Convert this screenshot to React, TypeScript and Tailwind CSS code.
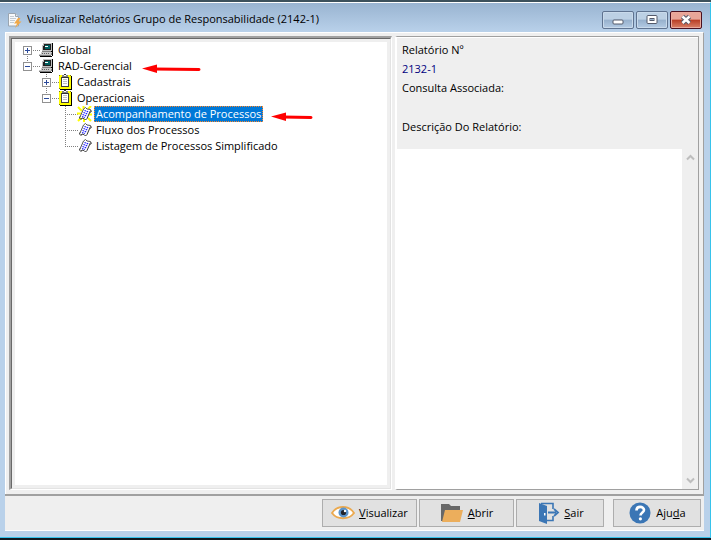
import { useState, type ReactNode } from "react";

type IconKind = "computer" | "clipboard" | "report" | "reportNew";

interface TreeNode {
  id: string;
  label: string;
  icon: IconKind;
  children?: TreeNode[];
  expandable?: boolean;
}

const NODES: TreeNode[] = [
  { id: "global", label: "Global", icon: "computer", expandable: true },
  {
    id: "rad",
    label: "RAD-Gerencial",
    icon: "computer",
    expandable: true,
    children: [
      { id: "cad", label: "Cadastrais", icon: "clipboard", expandable: true },
      {
        id: "ope",
        label: "Operacionais",
        icon: "clipboard",
        expandable: true,
        children: [
          { id: "acomp", label: "Acompanhamento de Processos", icon: "reportNew" },
          { id: "fluxo", label: "Fluxo dos Processos", icon: "report" },
          { id: "list", label: "Listagem de Processos Simplificado", icon: "report" },
        ],
      },
    ],
  },
];

function ComputerIcon() {
  return (
    <svg width="19" height="16" viewBox="0 0 19 16" shapeRendering="crispEdges">
      <path d="M6 1h9v8H5V3h1z" fill="#c0c0c0" />
      <path d="M7 2h7v6H6V4h1z" fill="#202020" />
      <path d="M8 3h5v4H8z" fill="#006060" />
      <path d="M8 4h3v1H8z" fill="#fff" />
      <path d="M15 1h1v9h-1zM14 9h1v1h-1z" fill="#000" />
      <path d="M5 9h9v1H5z" fill="#808080" />
      <path d="M4 10h11v3H2v-1h2z" fill="#c8c8c8" />
      <path d="M5 11h1v1H5zM7 11h1v1H7zM9 11h1v1H9zM11 11h1v1h-1z" fill="#606060" />
      <path d="M2 13h12v1H2zM14 11h1v2h-1z" fill="#808080" />
      <path d="M3 14h12v1H3zM15 10h1v4h-1z" fill="#000" />
    </svg>
  );
}

function ClipboardIcon() {
  return (
    <svg width="19" height="16" viewBox="0 0 19 16" shapeRendering="crispEdges">
      <path d="M4 2h12v14H4z" fill="#000" />
      <path d="M3 1h12v14H3z" fill="#ff0" />
      <path d="M3 1h1v1H3zM14 1h1v1h-1zM3 14h1v1H3z" fill="#808000" />
      <path d="M5 3h8v10H5z" fill="#404040" />
      <path d="M6 4h6v8H6z" fill="#fff" />
      <path d="M6 1h6v2H6z" fill="#808080" />
      <path d="M8 0h2v1H8zM6 3h6v1H6z" fill="#303030" />
      <path d="M8 1h2v1H8z" fill="#fff" />
      <path d="M7 5h4v1H7zM7 7h4v1H7zM7 9h4v1H7z" fill="#c0c0c0" />
    </svg>
  );
}

function ReportIcon({ isNew }: { isNew?: boolean }) {
  return (
    <svg width="19" height="16" viewBox="0 0 19 16">
      {isNew && (
        <path
          d="M3 1l4 4M8.500 0v3M16 0l-3 3M2 7.500h4M3 15l4-4M13 12l3 3M13 8.500h4M9 13v3"
          stroke="#ff0"
          strokeWidth="2"
        />
      )}
      <path d="M8.500 3l2-1.500 1.500 1.500 4 .5-3.500 8-2 2.500-1.500-1.500-4-1z" fill="#fff" />
      <path d="M8.500 3l2-1.500 1.500 1.500 3.500.5 1 2-1.500 1M8.500 3L5 11" fill="none" stroke="#555" />
      <path d="M15.500 4.500l-3.500 8-1.500 1.500-1.500-1.500-2-.5-1 1.500-1.500-1.500.5-1.500" fill="none" stroke="#333" />
      <path d="M9.500 4.500l4 1.500M8.500 6.500l4 1.500M7.500 8.500l4 1.500M7 10.500l3 1" stroke="#2020ff" strokeDasharray="1.600 .7" strokeWidth="1.200" />
    </svg>
  );
}

function NodeIcon({ kind }: { kind: IconKind }) {
  if (kind === "computer") return <ComputerIcon />;
  if (kind === "clipboard") return <ClipboardIcon />;
  return <ReportIcon isNew={kind === "reportNew"} />;
}

// dotted guide lines plus the +/- box
function Guide({ up, down, box }: { up: boolean; down: boolean; box?: "+" | "-" }) {
  return (
    <svg width="19" height="16" viewBox="0 0 19 16" className="overflow-visible" shapeRendering="crispEdges">
      {up && <path d="M9.500 0V8" stroke="#808080" strokeDasharray="1 1" />}
      {down && <path d="M9.500 8V16" stroke="#808080" strokeDasharray="1 1" />}
      <path d="M9 8.500H22" stroke="#808080" strokeDasharray="1 1" />
      {box && (
        <>
          <rect x="5.500" y="4.500" width="8" height="8" fill="#fff" stroke="#919191" />
          <path d="M7 8.500h5" stroke="#2b4a9b" />
          {box === "+" && <path d="M9.500 6v5" stroke="#2b4a9b" />}
        </>
      )}
    </svg>
  );
}

function Arrow({ length }: { length: number }) {
  return (
    <span className="relative ml-2 flex h-1">
      <svg width={length} height="10" viewBox={`0 0 ${length} 10`} className="absolute">
        <path d={`M12 5L${length - 2} 5.500`} stroke="#f00" strokeWidth="3" strokeLinecap="round" />
        <path d="M0 4.500L15 .5 15 9z" fill="#f00" />
      </svg>
    </span>
  );
}

interface BranchProps {
  nodes: TreeNode[];
  depth: number;
  open: Set<string>;
  selected: string;
  onToggle: (id: string) => void;
  onSelect: (id: string) => void;
}

function Branch({ nodes, depth, open, selected, onToggle, onSelect }: BranchProps) {
  return (
    <ul role={depth === 0 ? "tree" : "group"} className={depth === 0 ? "" : "pl-[19px]"}>
      {nodes.map((n, i) => {
        const isOpen = open.has(n.id);
        const guide = (
          <Guide
            up={depth > 0 || i > 0}
            down={i < nodes.length - 1}
            box={n.expandable ? (isOpen ? "-" : "+") : undefined}
          />
        );
        return (
          <li key={n.id} role="treeitem" aria-selected={selected === n.id}>
            <div className="flex h-4 items-center">
              {n.expandable ? (
                <button aria-label={n.label} aria-expanded={isOpen} onClick={() => onToggle(n.id)}>
                  {guide}
                </button>
              ) : (
                guide
              )}
              <span className="relative">
                <NodeIcon kind={n.icon} />
              </span>
              <button
                onClick={() => onSelect(n.id)}
                className={
                  selected === n.id
                    ? "h-4 whitespace-nowrap bg-[#0078d7] px-0.5 leading-4 text-white outline-1 -outline-offset-1 outline-dotted outline-[#ff8728]"
                    : "h-4 whitespace-nowrap px-0.5 leading-4"
                }
              >
                {n.label}
              </button>
              {n.id === "rad" && <Arrow length={59} />}
              {n.id === "acomp" && <Arrow length={42} />}
            </div>
            {n.children && isOpen && (
              <Branch
                nodes={n.children}
                depth={depth + 1}
                open={open}
                selected={selected}
                onToggle={onToggle}
                onSelect={onSelect}
              />
            )}
          </li>
        );
      })}
    </ul>
  );
}

function TitleIcon() {
  return (
    <svg width="16" height="16" viewBox="0 0 16 16">
      <path d="M1.500 1.500h7l3 3v9.500h-10z" fill="#f7f9fb" stroke="#9aa5b0" />
      <path d="M8.500 1.500v3h3" fill="#dfe5ea" stroke="#9aa5b0" />
      <path d="M3 4.500h4M3 6.500h6M3 8.500h5M3 10.500h4" stroke="#c3cbd3" />
      <path d="M11 6L7 11.500h3L8 16l6.500-6.500h-3L13.500 6z" fill="#f0a848" />
    </svg>
  );
}

function WindowButton({ label, close, children }: { label: string; close?: boolean; children: ReactNode }) {
  return (
    <button
      aria-label={label}
      className={
        close
          ? "flex h-[18px] w-8 items-center justify-center rounded-xs border border-[#4a1020] bg-linear-to-b from-[#e8a598] from-45% via-[#b83c24] via-50% to-[#d98068] inset-ring inset-ring-[#e9a99d]"
          : "flex h-[18px] w-8 items-center justify-center rounded-xs border border-[#5f7390] bg-linear-to-b from-[#bcd0e4] from-45% via-[#96b0cc] via-50% to-[#b4cbe4] inset-ring inset-ring-[#c9daeb]"
      }
    >
      {children}
    </button>
  );
}

function EyeIcon() {
  return (
    <svg width="24" height="24" viewBox="0 0 24 24">
      <path d="M1 12C6 4 18 4 23 12 18 19 6 19 1 12z" fill="#fff" stroke="#eba94f" strokeWidth="1.800" />
      <circle cx="12.500" cy="11.500" r="5" fill="#5b93c9" />
      <circle cx="12.500" cy="11.500" r="2.600" fill="#20232b" />
      <circle cx="14" cy="10" r="1.200" fill="#fff" />
    </svg>
  );
}

function FolderIcon() {
  return (
    <svg width="24" height="24" viewBox="0 0 24 24">
      <path d="M1 3h8l2 2h9v15H1z" fill="#686868" />
      <path d="M5 9h18l-3 12H2z" fill="#ecae5c" />
    </svg>
  );
}

function ExitIcon() {
  return (
    <svg width="24" height="24" viewBox="0 0 24 24">
      <path d="M3 2l8 3v18l-8-3z" fill="#3b76b5" />
      <path d="M5 2.500h12V8M11 19.500h6V15" fill="none" stroke="#3b76b5" strokeWidth="1.600" />
      <path d="M12 11.500h8M18 8l4 3.500-4 3.500" fill="none" stroke="#3b76b5" strokeWidth="1.800" />
      <path d="M8 12h1.500v2.500H8z" fill="#fff" />
    </svg>
  );
}

function HelpIcon() {
  return (
    <svg width="24" height="24" viewBox="0 0 24 24">
      <circle cx="12" cy="12" r="10.500" fill="#3b76b5" />
      <path d="M8.500 9.500c0-5 7.500-4.500 7.500-.5 0 2.500-3.500 2.500-3.500 5.500" fill="none" stroke="#fff" strokeWidth="2.600" />
      <circle cx="12.400" cy="17.800" r="1.600" fill="#fff" />
    </svg>
  );
}

const ACTION =
  "flex h-7 items-center justify-center gap-1 border border-[#adadad] bg-[#e1e1e1]";

export default function App() {
  const [open, setOpen] = useState<Set<string>>(new Set(["rad", "ope"]));
  const [selected, setSelected] = useState("acomp");

  function toggle(id: string) {
    setOpen((prev) => {
      const next = new Set(prev);
      if (next.has(id)) next.delete(id);
      else next.add(id);
      return next;
    });
  }

  return (
    <div className="flex h-screen flex-col border-t-2 border-b-2 border-t-[#3c515c] border-b-[#101820] bg-[#b9d1ea] font-['Open_Sans','Noto_Sans',sans-serif] text-[11px] text-black">
      <div className="flex min-h-0 flex-1 flex-col border-t border-r border-b border-t-white border-r-[#36c3ec] border-b-[#36c3ec] pr-1.5 pb-1.5 pl-[5px]">
        <header className="-mr-1.5 -ml-[5px] flex h-[29px] shrink-0 items-center gap-1 bg-linear-to-b from-[#99b4d1] to-[#b9d1ea] pt-1 pr-2 pl-[7px]">
          <TitleIcon />
          <h1 className="flex-1 truncate">Visualizar Relatórios Grupo de Responsabilidade (2142-1)</h1>
          <div className="flex gap-0.5">
            <WindowButton label="Minimizar">
              <svg width="12" height="12" viewBox="0 0 12 12">
                <rect x="1" y="6" width="10" height="4" rx="1" fill="#fff" stroke="#545a6b" />
              </svg>
            </WindowButton>
            <WindowButton label="Maximizar">
              <svg width="12" height="12" viewBox="0 0 12 12">
                <rect x="1" y="1.500" width="10" height="8" rx="1" fill="#fff" stroke="#545a6b" />
                <rect x="4" y="4.500" width="4" height="2" fill="#96b0cc" stroke="#545a6b" />
              </svg>
            </WindowButton>
            <WindowButton label="Fechar" close>
              <svg width="12" height="12" viewBox="0 0 12 12">
                <path d="M2.500 2.500l7 6.500M9.500 2.500l-7 6.500" stroke="#545a6b" strokeWidth="4.500" />
                <path d="M2.500 2.500l7 6.500M9.500 2.500l-7 6.500" stroke="#fff" strokeWidth="2.500" />
              </svg>
            </WindowButton>
          </div>
        </header>

        <main className="flex min-h-0 flex-1 flex-col border-b border-b-white bg-[#efefef]">
          <div className="flex min-h-0 flex-1 border-t border-r border-l border-t-white border-r-[#a0a0a0] border-l-white pt-[3px] pr-1 pb-1 pl-[3px]">
            <div className="flex w-[383px] shrink-0 border-t-2 border-r border-b border-l-2 border-t-[#a0a0a0] border-r-white border-b-white border-l-[#a0a0a0]">
              <div className="flex min-w-0 flex-1 border-t border-r border-b border-l border-t-[#696969] border-r-[#e3e3e3] border-b-[#e3e3e3] border-l-[#696969] p-[3px]">
                <div className="flex-1 bg-white pl-[3px]">
                  <Branch
                    nodes={NODES}
                    depth={0}
                    open={open}
                    selected={selected}
                    onToggle={toggle}
                    onSelect={setSelected}
                  />
                </div>
              </div>
            </div>
            <section className="ml-[3px] flex min-w-0 flex-1 flex-col border-t border-r border-b border-l-2 border-t-[#a0a0a0] border-r-[#a0a0a0] border-b-[#a0a0a0] border-l-white">
              <div className="border-t border-white px-[5px] pt-0.5 pb-[13px] leading-[19px]">
                <p>Relatório Nº</p>
                <p className="text-[#000080]">2132-1</p>
                <p>Consulta Associada:</p>
                <p className="h-5" />
                <label htmlFor="descricao">Descrição Do Relatório:</label>
              </div>
              <div className="flex min-h-0 flex-1">
                <textarea id="descricao" readOnly className="min-w-0 flex-1 resize-none bg-white outline-none" />
                <div className="flex w-4 flex-col items-center justify-between py-1">
                  <svg width="9" height="9" viewBox="0 0 9 9">
                    <path d="M1 6.500l3.500-3.500L8 6.500" fill="none" stroke="#bdbdbd" strokeWidth="2" />
                  </svg>
                  <svg width="9" height="9" viewBox="0 0 9 9">
                    <path d="M1 2.500L4.500 6 8 2.500" fill="none" stroke="#bdbdbd" strokeWidth="2" />
                  </svg>
                </div>
              </div>
            </section>
          </div>

          <footer className="flex shrink-0 justify-end gap-0.5 border-t-2 border-[#a0a0a0] pt-[3px] pr-[3px] pb-[3px]">
            <button className={`${ACTION} w-[95px]`}>
              <EyeIcon />
              <span>
                <u>V</u>isualizar
              </span>
            </button>
            <button className={`${ACTION} w-[95px]`}>
              <FolderIcon />
              <span>
                <u>A</u>brir
              </span>
            </button>
            <button className={`${ACTION} w-[88px]`}>
              <ExitIcon />
              <span>
                <u>S</u>air
              </span>
            </button>
            <button className={`${ACTION} ml-[7px] w-[88px]`}>
              <HelpIcon />
              <span>
                Aju<u>d</u>a
              </span>
            </button>
          </footer>
        </main>
      </div>
    </div>
  );
}
